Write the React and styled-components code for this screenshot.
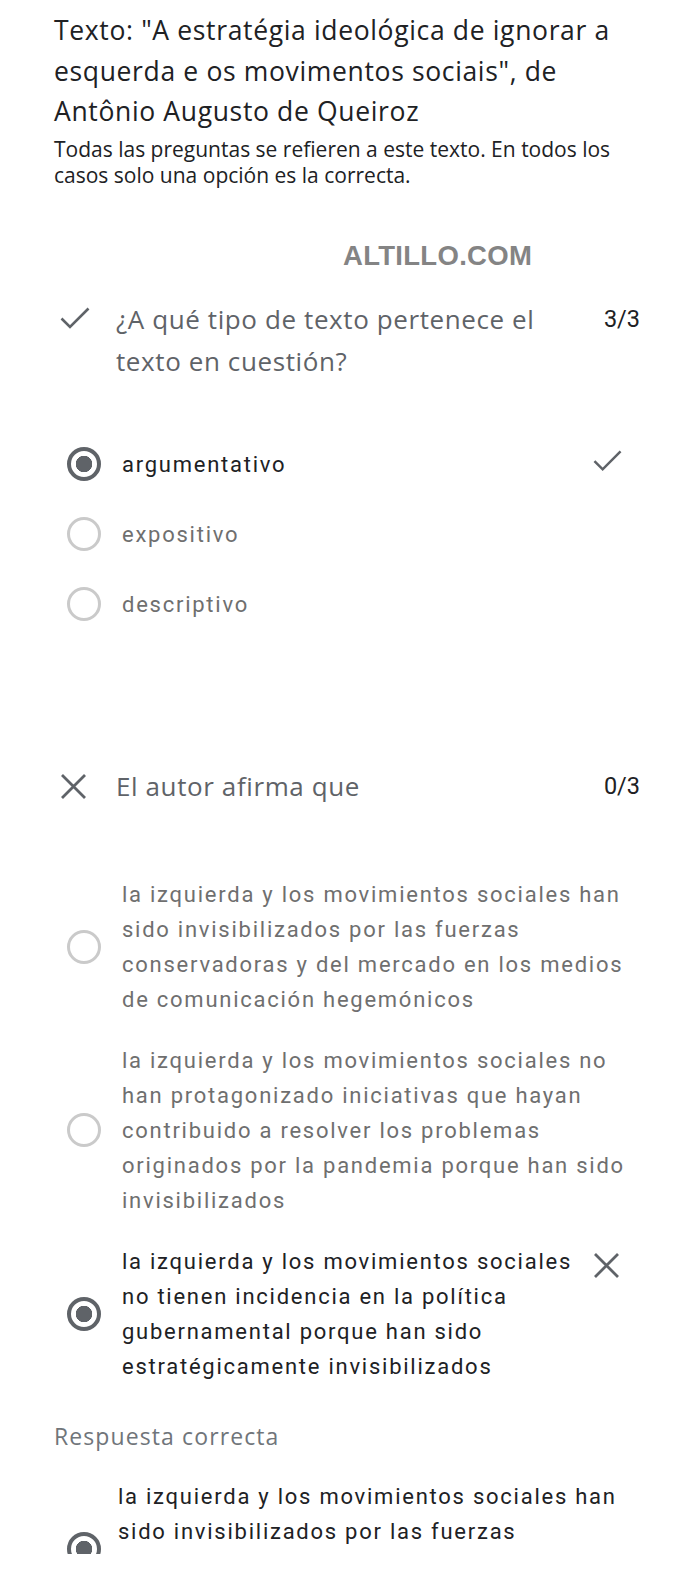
import React from 'react'
import styled, {createGlobalStyle} from 'styled-components'

const GlobalStyle = createGlobalStyle`
  body {
    margin: 0;
    background: #ffffff;
    font-family: "Open Sans", "Liberation Sans", sans-serif;
  }
`

const questions = [
  {
    id: 1,
    ok: true,
    title: '¿A qué tipo de texto pertenece el texto en cuestión?',
    points: '3/3',
    listGap: 47.5,
    options: [
      {text: 'argumentativo', checked: true, mark: 'ok'},
      {text: 'expositivo'},
      {text: 'descriptivo'},
    ],
  },
  {
    id: 2,
    ok: false,
    title: 'El autor afirma que',
    points: '0/3',
    listGap: 56.5,
    options: [
      {text: 'la izquierda y los movimientos sociales han sido invisibilizados por las fuerzas conservadoras y del mercado en los medios de comunicación hegemónicos'},
      {text: 'la izquierda y los movimientos sociales no han protagonizado iniciativas que hayan contribuido a resolver los problemas originados por la pandemia porque han sido invisibilizados'},
      {text: 'la izquierda y los movimientos sociales no tienen incidencia en la política gubernamental porque han sido estratégicamente invisibilizados', checked: true, mark: 'bad'},
    ],
    correct: 'la izquierda y los movimientos sociales han sido invisibilizados por las fuerzas conservadoras y del mercado en los medios de comunicación hegemónicos',
  },
]

const CheckIcon = ({size = 30}) => (
  <svg width={size} height={size * 0.75} viewBox="0 0 30 22.5" fill="none">
    <polyline points="1.5,11.5 10,20 28.5,1.5" stroke="#5f6368" strokeWidth="2.6" />
  </svg>
)

const CrossIcon = ({size = 27}) => (
  <svg width={size} height={size} viewBox="0 0 27 27" fill="none">
    <path d="M2 2 L25 25 M25 2 L2 25" stroke="#5f6368" strokeWidth="2.8" />
  </svg>
)

const App = () => {
  return (
    <Page>
      <GlobalStyle />
      <Intro>
        <Title>Texto: "A estratégia ideológica de ignorar a esquerda e os movimentos sociais", de Antônio Augusto de Queiroz</Title>
        <Subtitle>Todas las preguntas se refieren a este texto. En todos los casos solo una opción es la correcta.</Subtitle>
      </Intro>
      <Watermark>ALTILLO.COM</Watermark>
      {questions.map(q => (
        <Question key={q.id} first={q.id === 1}>
          <QuestionHead>
            <StatusIcon>{q.ok ? <CheckIcon /> : <CrossIcon />}</StatusIcon>
            <QuestionText>{q.title}</QuestionText>
            <Points>{q.points}</Points>
          </QuestionHead>
          <OptionList gap={q.listGap}>
            {q.options.map((o, i) => (
              <Option key={i}>
                <Radio checked={o.checked} />
                <OptionText checked={o.checked}>{o.text}</OptionText>
                {o.mark && (
                  <Mark>
                    {o.mark === 'ok' ? <CheckIcon size={29} /> : <CrossIcon size={27} />}
                  </Mark>
                )}
              </Option>
            ))}
          </OptionList>
          {q.correct && (
            <>
              <CorrectLabel>Respuesta correcta</CorrectLabel>
              <Option answer>
                <Radio checked />
                <OptionText checked answer>{q.correct}</OptionText>
              </Option>
            </>
          )}
        </Question>
      ))}
    </Page>
  )
}

const Page = styled.div`
  height: 1554px;
  overflow: hidden;
  padding-top: 10px;
  box-sizing: border-box;
`

const Intro = styled.div`
  padding: 0 54px;
`

const Title = styled.h1`
  margin: 0;
  font-family: "Open Sans", sans-serif;
  font-weight: 400;
  font-size: 26.5px;
  letter-spacing: 0.65px;
  line-height: 40.5px;
  color: #202124;
`

const Subtitle = styled.p`
  margin: 4px 0 0;
  font-family: "Open Sans", sans-serif;
  font-size: 21px;
  letter-spacing: 0;
  line-height: 26px;
  color: #202124;
`

const Watermark = styled.div`
  margin: 53px 0 0 343px;
  font-family: "Liberation Sans", Arial, sans-serif;
  font-weight: 700;
  font-size: 27.5px;
  letter-spacing: 0.3px;
  line-height: 30px;
  color: #848484;
`

const Question = styled.section`
  padding: 0 60px 0 60px;
  margin-top: ${p => (p.first ? '27px' : '126px')};
`

const QuestionHead = styled.div`
  display: flex;
  align-items: flex-start;
`

const StatusIcon = styled.div`
  width: 30px;
  height: 42px;
  flex: none;
  display: flex;
  align-items: center;
`

const QuestionText = styled.div`
  flex: 1;
  margin: 0 26px;
  font-family: "Open Sans", sans-serif;
  font-size: 26px;
  letter-spacing: 0.6px;
  line-height: 42px;
  color: #5f6368;
`

const Points = styled.div`
  flex: none;
  font-family: Roboto, sans-serif;
  font-size: 23.5px;
  line-height: 42px;
  color: #202124;
`

const OptionList = styled.div`
  margin-top: ${p => p.gap}px;
  display: flex;
  flex-direction: column;
`

const Option = styled.div`
  display: flex;
  align-items: center;
  min-height: 70px;
  padding: 13px 0;
  margin-top: ${p => (p.answer ? '15px' : '0')};
  box-sizing: border-box;
`

const Radio = styled.span`
  flex: none;
  width: 34px;
  height: 34px;
  margin-left: 7px;
  box-sizing: border-box;
  border-radius: 50%;
  border: ${p => (p.checked ? '4px solid #5f6368' : '3px solid #cacaca')};
  background: ${p => (p.checked ? 'radial-gradient(circle, #5f6368 0 8px, transparent 8.5px)' : 'transparent')};
`

const OptionText = styled.div`
  flex: 1;
  margin-left: ${p => (p.answer ? '17px' : '21px')};
  font-family: Roboto, sans-serif;
  font-size: 22px;
  line-height: 35px;
  letter-spacing: 1.75px;
  color: ${p => (p.checked ? '#202124' : '#6f6f6f')};
`

const Mark = styled.div`
  flex: none;
  width: 30px;
  align-self: flex-start;
  padding-top: 8px;
  margin: 0 17px 0 5px;
`

const CorrectLabel = styled.div`
  margin: 24px 0 0 -6px;
  font-family: "Open Sans", sans-serif;
  font-size: 23px;
  letter-spacing: 1.1px;
  line-height: 30px;
  color: #70757a;
`

export default App
